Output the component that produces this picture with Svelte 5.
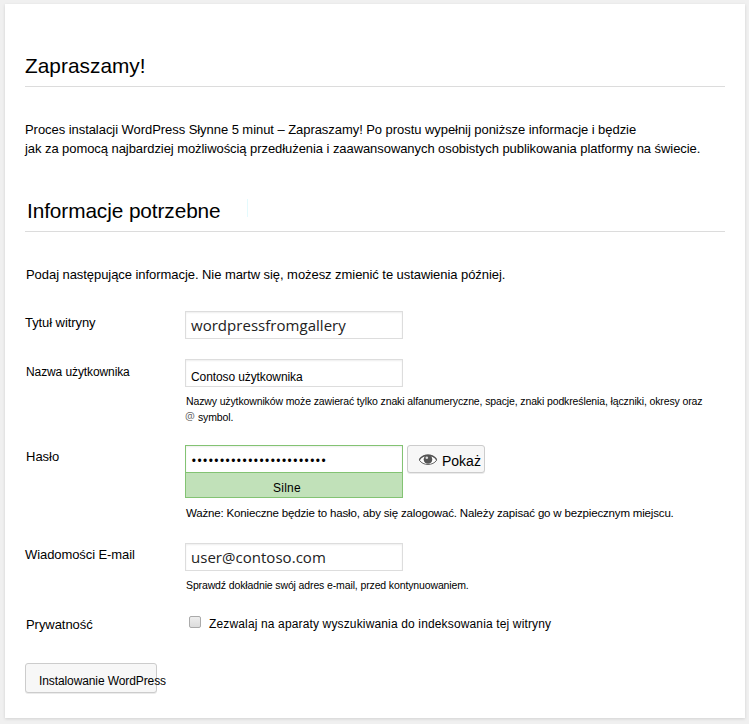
<script>
  let title = $state('wordpressfromgallery');
  let user = $state('Contoso użytkownika');
  let email = $state('user@contoso.com');
  let indexing = $state(false);
  const dots = '•'.repeat(24);
</script>

<div class="page">
  <main class="card">
    <h1>Zapraszamy!</h1>
    <p class="intro">
      <span class="line one">Proces instalacji WordPress Słynne 5 minut – Zapraszamy! Po prostu wypełnij poniższe informacje i będzie</span>
      <span class="line two">jak za pomocą najbardziej możliwością przedłużenia i zaawansowanych osobistych publikowania platformy na świecie.</span>
    </p>

    <h2><span>Informacje potrzebne</span><i class="caret"></i></h2>
    <p class="lead">Podaj następujące informacje. Nie martw się, możesz zmienić te ustawienia później.</p>

    <form>
      <div class="row title">
        <div class="label wide">Tytuł witryny</div>
        <div class="field"><div class="box web">{title}</div></div>
      </div>

      <div class="row user">
        <div class="label small">Nazwa użytkownika</div>
        <div class="field">
          <div class="box plain">{user}</div>
          <div class="help">Nazwy użytkowników może zawierać tylko znaki alfanumeryczne, spacje, znaki podkreślenia, łączniki, okresy oraz</div>
          <div class="help second"><span class="at">@</span><span>symbol.</span></div>
        </div>
      </div>

      <div class="row pass">
        <div class="label">Hasło</div>
        <div class="field">
          <div class="pair">
            <div class="secret">
              <div class="dots">{dots}</div>
              <div class="strength">Silne</div>
            </div>
            <button type="button" class="btn show">
              <svg width="20" height="14" viewBox="0 0 20 14">
                <path d="M1.2 7C5 .4 15 .4 18.8 7C15 13 5 13 1.2 7Z" fill="#fff" stroke="#666" stroke-width="1" />
                <path d="M1.4 6.6C5 .8 15 .8 18.6 6.6" fill="none" stroke="#555" stroke-width="1.4" />
                <circle cx="10" cy="6.4" r="4.3" fill="#555" />
                <circle cx="8.8" cy="4.7" r="1.3" fill="#ddd" />
              </svg>
              <span>Pokaż</span>
            </button>
          </div>
          <div class="note">Ważne: Konieczne będzie to hasło, aby się zalogować. Należy zapisać go w bezpiecznym miejscu.</div>
        </div>
      </div>

      <div class="row mail">
        <div class="label wide">Wiadomości E-mail</div>
        <div class="field">
          <div class="box web">{email}</div>
          <div class="help">Sprawdź dokładnie swój adres e-mail, przed kontynuowaniem.</div>
        </div>
      </div>

      <div class="row privacy">
        <div class="label">Prywatność</div>
        <label class="check">
          <input type="checkbox" bind:checked={indexing} />
          <span>Zezwalaj na aparaty wyszukiwania do indeksowania tej witryny</span>
        </label>
      </div>

      <button type="button" class="btn install">Instalowanie WordPress</button>
    </form>
  </main>
</div>

<style>
  :global(body) { background: #f0f0f0; }
  .page, .page * { box-sizing: border-box; }
  .page {
    height: 724px;
    padding: 4px 4px 6px 5px;
    overflow: hidden;
    background: #f0f0f0;
  }
  .card {
    height: 714px;
    padding: 0 20px;
    background: #fff;
    box-shadow: 0 1px 3px rgba(0, 0, 0, 0.13);
    font: 13px/19px "Liberation Sans", Arial, sans-serif;
    color: #000;
    white-space: nowrap;
  }
  h1, h2 {
    margin: 0;
    font-weight: 400;
    font-size: 20.8px;
    line-height: 24px;
    border-bottom: 1px solid #dcdcdc;
  }
  h1 { height: 83px; padding-top: 50px; letter-spacing: 0.04px; }
  h2 { display: flex; height: 38px; margin-top: 36px; padding: 5px 0 0 2px; letter-spacing: -0.09px; }
  .caret { width: 1px; height: 18px; margin: 0 0 0 26px; background: #e4fafd; }
  .intro { margin: 33px 0 0; }
  .line { display: block; }
  .one { letter-spacing: -0.055px; }
  .two { letter-spacing: -0.067px; }
  .lead { margin: 33px 0 0 1px; letter-spacing: -0.058px; }

  form { margin-top: 27px; }
  .row { display: flex; }
  .label { width: 160px; padding: 2px 0 0 1px; }
  .label.small { font-size: 12px; letter-spacing: -0.1px; padding-top: 4px; }
  .label.wide { padding-left: 0; letter-spacing: -0.08px; }
  .field { width: 540px; }
  .title { height: 48px; }
  .user { height: 86px; }
  .pass { height: 98px; }
  .mail { height: 72px; }
  .privacy { height: 48px; }
  .privacy .label { padding-top: 0; letter-spacing: -0.05px; }

  .box {
    width: 218px;
    height: 28px;
    padding-left: 5px;
    border: 1px solid #ddd;
    background: #fff;
    box-shadow: inset 0 1px 2px rgba(0, 0, 0, 0.07);
  }
  .web { font: 15px/26px "Open Sans", sans-serif; color: #222; letter-spacing: 0.03px; }
  .plain { font-size: 12px; line-height: 34px; letter-spacing: -0.1px; }
  .help { margin: 7px 0 0 1px; font-size: 10.5px; line-height: 15px; letter-spacing: -0.128px; }
  .help.second { display: flex; margin: 1px 0 0; }
  .at { width: 13px; font: 11px/11px "Open Sans", sans-serif; color: #666; }

  .pair { display: flex; align-items: flex-start; gap: 4px; }
  .secret { width: 218px; height: 53px; border: 1px solid #83c373; background: #c1e1b9; }
  .dots {
    height: 27px;
    padding-left: 5px;
    border-bottom: 1px solid #83c373;
    background: #fff;
    box-shadow: inset 0 1px 2px rgba(0, 0, 0, 0.07);
    font: 15px/28px "Open Sans", sans-serif;
  }
  .strength { padding-left: 87px; font-size: 12px; line-height: 31px; letter-spacing: 0.25px; height: 24px; }
  .note { margin: 7px 0 0 1px; font-size: 11.5px; line-height: 16px; letter-spacing: -0.168px; }

  .btn {
    display: flex;
    border: 1px solid #ccc;
    border-radius: 3px;
    background: #f7f7f7;
    box-shadow: 0 1px 0 rgba(0, 0, 0, 0.08);
    color: #000;
    font-family: inherit;
    white-space: nowrap;
  }
  .show { width: 78px; height: 28px; padding: 0 0 0 10px; font-size: 14px; line-height: 31px; }
  .show svg { margin: 7px 4px 0 0; flex: none; }
  .install { width: 132px; height: 30px; padding: 0 0 0 13px; font-size: 12px; line-height: 34px; letter-spacing: -0.1px; }

  .check { display: flex; font-size: 12px; letter-spacing: 0.145px; padding-left: 4px; }
  .check input {
    appearance: none;
    width: 12px;
    height: 12px;
    margin: 1px 8px 0 0;
    border: 1px solid #aaa;
    border-radius: 2px;
    background: linear-gradient(#eee, #dcdcdc);
  }
</style>
